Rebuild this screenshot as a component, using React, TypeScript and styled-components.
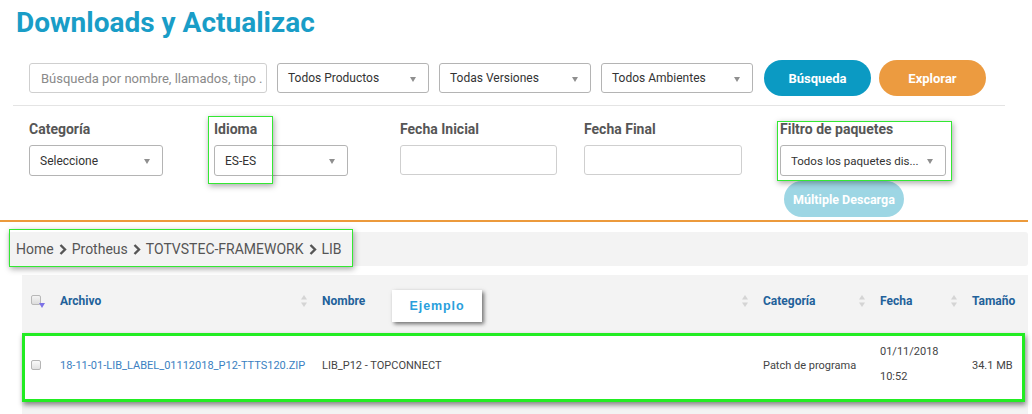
import React from 'react';
import styled, { createGlobalStyle } from 'styled-components';

const Global = createGlobalStyle`
  html, body { margin: 0; padding: 0; background: #fff; }
  body { font-family: Roboto, "Liberation Sans", sans-serif; }
  * { box-sizing: border-box; }
`;

const Page = styled.div`
  width: 1032px;
  height: 414px;
  overflow: hidden;
  padding: 6px 4px 0 0;
`;

const Title = styled.h1`
  margin: 0 0 20px 16px;
  font-size: 28px;
  line-height: 34px;
  font-weight: 700;
  color: #199dc7;
  white-space: nowrap;
`;

const SearchRow = styled.div`
  display: flex;
  align-items: center;
  gap: 10px;
  height: 36px;
  padding-left: 29px;
`;

const SearchInput = styled.div`
  width: 238px;
  height: 30px;
  border: 1px solid #cfcfcf;
  border-radius: 3px;
  display: flex;
  align-items: center;
  padding-left: 11px;
  font-size: 13px;
  color: #8a8a8a;
  white-space: nowrap;
`;

const SelectBox = styled.div<{ $w: number; $h?: number; $fs?: number }>`
  width: ${(p) => p.$w}px;
  height: ${(p) => p.$h ?? 30}px;
  border: 1px solid #b4b4b4;
  border-radius: 3px;
  display: flex;
  align-items: center;
  justify-content: space-between;
  gap: 8px;
  padding: 0 12px 0 10px;
  font-size: ${(p) => p.$fs ?? 12}px;
  color: #333;
  white-space: nowrap;
  background: #fff;
`;

const Caret = styled.span`
  flex: none;
  width: 0;
  height: 0;
  border-left: 3.5px solid transparent;
  border-right: 3.5px solid transparent;
  border-top: 5px solid #8f8f8f;
  margin-top: 2px;
`;

const ButtonGroup = styled.div`
  display: flex;
  gap: 8px;
  margin-left: 1px;
`;

const Pill = styled.div<{ $bg: string; $w: number }>`
  width: ${(p) => p.$w}px;
  height: 36px;
  border-radius: 18px;
  background: ${(p) => p.$bg};
  color: #fff;
  font-weight: 700;
  font-size: 13px;
  display: flex;
  align-items: center;
  justify-content: center;
  white-space: nowrap;
`;

const Divider = styled.div`
  height: 1px;
  background: #e4e4e4;
  margin: 9px 23px 0 13px;
`;

const FilterRow = styled.div`
  display: grid;
  grid-template-columns: 185px 186px 184px 196px 1fr;
  padding-left: 29px;
  margin-top: 15px;
  align-items: start;
`;

const Field = styled.div`
  position: relative;
  display: flex;
  flex-direction: column;
  gap: 8px;
`;

const Label = styled.div`
  font-size: 14px;
  line-height: 16px;
  font-weight: 700;
  color: #565656;
  white-space: nowrap;
`;

const DateInput = styled.div<{ $w: number }>`
  width: ${(p) => p.$w}px;
  height: 30px;
  border: 1px solid #cfcfcf;
  border-radius: 3px;
`;

const MultiButton = styled.div`
  width: 120px;
  height: 36px;
  margin: -3px 0 0 4px;
  border-radius: 18px;
  background: #9dd6e4;
  color: #fff;
  font-weight: 700;
  font-size: 12.5px;
  display: flex;
  align-items: center;
  justify-content: center;
  white-space: nowrap;
`;

const Highlight = styled.div<{ $l: number; $t: number; $w: number; $h: number }>`
  position: absolute;
  left: ${(p) => p.$l}px;
  top: ${(p) => p.$t}px;
  width: ${(p) => p.$w}px;
  height: ${(p) => p.$h}px;
  border: 1px solid #33e833;
  box-shadow: 1px 2px 6px rgba(0, 0, 0, 0.35);
  pointer-events: none;
`;

const OrangeLine = styled.div`
  height: 2px;
  background: #ec9a3c;
  margin-top: 3px;
`;

const CrumbBar = styled.div`
  position: relative;
  margin: 10px 0 0 8px;
  height: 34px;
  background: #f3f3f3;
  border-radius: 3px;
  display: flex;
  align-items: center;
  gap: 5px;
  padding-left: 8px;
  font-size: 14px;
  color: #555;
  white-space: nowrap;
`;

const Chevron = () => (
  <svg width="8" height="11" viewBox="0 0 8 11">
    <path d="M1.5 1 L6 5.5 L1.5 10" fill="none" stroke="#555" strokeWidth="2.4" />
  </svg>
);

const Table = styled.div`
  margin: 9px 0 0 22px;
  background: #f3f3f3;
  height: 200px;
`;

const cols = '26px 262px 441px 117px 92px 1fr';

const HeadRow = styled.div`
  position: relative;
  display: grid;
  grid-template-columns: ${cols};
  height: 52px;
  align-items: center;
`;

const HeadCell = styled.div`
  display: flex;
  align-items: center;
  justify-content: space-between;
  padding: 0 3px 0 12px;
  font-size: 12px;
  font-weight: 700;
  color: #22619a;
  white-space: nowrap;
`;

const CheckCell = styled.div`
  padding-left: 9px;
  display: flex;
  align-items: center;
`;

const HeadCheck = styled.span`
  position: relative;
  width: 10px;
  height: 10px;
  border: 1px solid #b8b8b8;
  border-radius: 2px;
  background: linear-gradient(#f4f4f4, #dcdcdc);
  margin-top: -2px;
  &::after {
    content: '';
    position: absolute;
    left: 7px;
    top: 7px;
    border-left: 3px solid transparent;
    border-right: 3px solid transparent;
    border-top: 5px solid #7d72e6;
  }
`;

const RowCheck = styled.span`
  width: 10px;
  height: 10px;
  border: 1px solid #b5b5b5;
  border-radius: 2px;
  background: linear-gradient(#fafafa, #e2e2e2);
`;

const SortIcon = () => (
  <svg width="6" height="12" viewBox="0 0 6 12">
    <path d="M3 0 L6 4.5 L0 4.5 Z" fill="#d4d4d4" />
    <path d="M3 12 L6 7.5 L0 7.5 Z" fill="#d4d4d4" />
  </svg>
);

const Tag = styled.div`
  position: absolute;
  left: 370px;
  top: 15px;
  width: 90px;
  height: 32px;
  background: #fff;
  box-shadow: 2px 2px 4px rgba(0, 0, 0, 0.55);
  display: flex;
  align-items: center;
  justify-content: center;
  font-family: "Liberation Sans", Arial, sans-serif;
  font-weight: 700;
  font-size: 12.5px;
  letter-spacing: 0.9px;
  color: #2a9fdc;
`;

const DataRow = styled.div`
  display: grid;
  grid-template-columns: ${cols};
  height: 69px;
  margin: 6px 3px 0 0;
  background: #fff;
  align-items: center;
  padding-bottom: 5px;
  outline: 3px solid #22ec22;
  outline-offset: -3px;
  box-shadow: 1px 3px 5px rgba(0, 0, 0, 0.45);
`;

const Cell = styled.div<{ $link?: boolean }>`
  padding-left: 12px;
  font-size: 11px;
  color: ${(p) => (p.$link ? '#3b7fc1' : '#444')};
  white-space: nowrap;
`;

const DateCell = styled(Cell)`
  display: flex;
  flex-direction: column;
  gap: 11px;
  line-height: 14px;
  margin-top: -1px;
`;

export default function App() {
  return (
    <Page>
      <Global />
      <Title>Downloads y Actualizac</Title>
      <SearchRow>
        <SearchInput>Búsqueda por nombre, llamados, tipo .</SearchInput>
        <SelectBox $w={152}>Todos Productos<Caret /></SelectBox>
        <SelectBox $w={152}>Todas Versiones<Caret /></SelectBox>
        <SelectBox $w={152}>Todos Ambientes<Caret /></SelectBox>
        <ButtonGroup>
          <Pill $bg="#0b9ac3" $w={107}>Búsqueda</Pill>
          <Pill $bg="#ec9b40" $w={107}>Explorar</Pill>
        </ButtonGroup>
      </SearchRow>
      <Divider />
      <FilterRow>
        <Field>
          <Label>Categoría</Label>
          <SelectBox $w={134} $h={31}>Seleccione<Caret /></SelectBox>
        </Field>
        <Field>
          <Label>Idioma</Label>
          <SelectBox $w={134} $h={31}>ES-ES<Caret /></SelectBox>
          <Highlight $l={-6} $t={-5} $w={65} $h={68} />
        </Field>
        <Field>
          <Label>Fecha Inicial</Label>
          <DateInput $w={157} />
        </Field>
        <Field>
          <Label>Fecha Final</Label>
          <DateInput $w={158} />
        </Field>
        <Field>
          <Label>Filtro de paquetes</Label>
          <SelectBox $w={166} $h={31} $fs={11.5}>Todos los paquetes dis...<Caret /></SelectBox>
          <MultiButton>Múltiple Descarga</MultiButton>
          <Highlight $l={-3} $t={0} $w={175} $h={60} />
        </Field>
      </FilterRow>
      <OrangeLine />
      <CrumbBar>
        <span>Home</span>
        <Chevron />
        <span>Protheus</span>
        <Chevron />
        <span>TOTVSTEC-FRAMEWORK</span>
        <Chevron />
        <span>LIB</span>
        <Highlight $l={1} $t={-3} $w={344} $h={38} />
      </CrumbBar>
      <Table>
        <HeadRow>
          <CheckCell><HeadCheck /></CheckCell>
          <HeadCell>Archivo<SortIcon /></HeadCell>
          <HeadCell>Nombre<SortIcon /></HeadCell>
          <HeadCell>Categoría<SortIcon /></HeadCell>
          <HeadCell>Fecha<SortIcon /></HeadCell>
          <HeadCell>Tamaño</HeadCell>
          <Tag>Ejemplo</Tag>
        </HeadRow>
        <DataRow>
          <CheckCell><RowCheck /></CheckCell>
          <Cell $link>18-11-01-LIB_LABEL_01112018_P12-TTTS120.ZIP</Cell>
          <Cell>LIB_P12 - TOPCONNECT</Cell>
          <Cell>Patch de programa</Cell>
          <DateCell>
            <span>01/11/2018</span>
            <span>10:52</span>
          </DateCell>
          <Cell>34.1 MB</Cell>
        </DataRow>
      </Table>
    </Page>
  );
}
